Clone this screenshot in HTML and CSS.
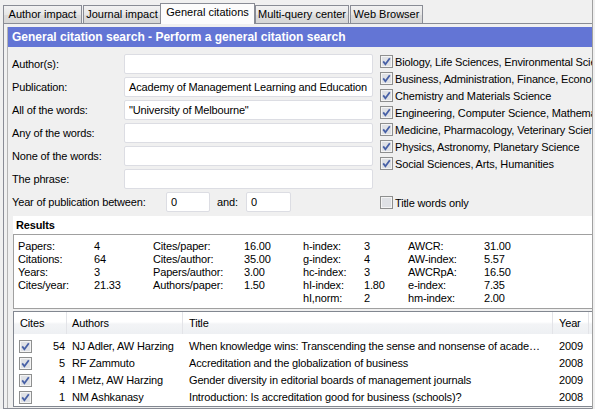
FILE: index.html
```html
<!DOCTYPE html>
<html>
<head>
<meta charset="utf-8">
<title>General citations</title>
<link rel="stylesheet" href="styles.css">
</head>
<body>
<div class="window">
  <div class="tabs">
    <div class="tab t-author">Author impact</div>
    <div class="tab t-journal">Journal impact</div>
    <div class="tab t-general active">General citations</div>
    <div class="tab t-multi">Multi-query center</div>
    <div class="tab t-web">Web Browser</div>
  </div>
  <div class="panel">
    <div class="frame">
      <div class="banner">General citation search - Perform a general citation search</div>
      <div class="search">
        <div class="fields">
          <div class="field"><label>Author(s):</label><div class="input"></div></div>
          <div class="field"><label>Publication:</label><div class="input">Academy of Management Learning and Education</div></div>
          <div class="field"><label>All of the words:</label><div class="input">"University of Melbourne"</div></div>
          <div class="field"><label>Any of the words:</label><div class="input"></div></div>
          <div class="field"><label>None of the words:</label><div class="input"></div></div>
          <div class="field"><label>The phrase:</label><div class="input"></div></div>
          <div class="field year"><label>Year of publication between:</label><div class="input y1">0</div><span class="and">and:</span><div class="input y2">0</div></div>
        </div>
        <div class="subjects">
          <div class="check"><svg class="cb" width="13" height="13" viewBox="0 0 13 13"><rect x="0.5" y="0.5" width="12" height="12" fill="#f4f4f4" stroke="#8e8f8f"/><rect x="2" y="2" width="9" height="9" fill="#dfe1e5"/><path d="M3.2 6.4 L5.4 9.2 L9.8 3.2" fill="none" stroke="#4760a6" stroke-width="1.8"/></svg><span>Biology, Life Sciences, Environmental Science</span></div>
          <div class="check"><svg class="cb" width="13" height="13" viewBox="0 0 13 13"><rect x="0.5" y="0.5" width="12" height="12" fill="#f4f4f4" stroke="#8e8f8f"/><rect x="2" y="2" width="9" height="9" fill="#dfe1e5"/><path d="M3.2 6.4 L5.4 9.2 L9.8 3.2" fill="none" stroke="#4760a6" stroke-width="1.8"/></svg><span>Business, Administration, Finance, Economics</span></div>
          <div class="check"><svg class="cb" width="13" height="13" viewBox="0 0 13 13"><rect x="0.5" y="0.5" width="12" height="12" fill="#f4f4f4" stroke="#8e8f8f"/><rect x="2" y="2" width="9" height="9" fill="#dfe1e5"/><path d="M3.2 6.4 L5.4 9.2 L9.8 3.2" fill="none" stroke="#4760a6" stroke-width="1.8"/></svg><span>Chemistry and Materials Science</span></div>
          <div class="check"><svg class="cb" width="13" height="13" viewBox="0 0 13 13"><rect x="0.5" y="0.5" width="12" height="12" fill="#f4f4f4" stroke="#8e8f8f"/><rect x="2" y="2" width="9" height="9" fill="#dfe1e5"/><path d="M3.2 6.4 L5.4 9.2 L9.8 3.2" fill="none" stroke="#4760a6" stroke-width="1.8"/></svg><span>Engineering, Computer Science, Mathematics</span></div>
          <div class="check"><svg class="cb" width="13" height="13" viewBox="0 0 13 13"><rect x="0.5" y="0.5" width="12" height="12" fill="#f4f4f4" stroke="#8e8f8f"/><rect x="2" y="2" width="9" height="9" fill="#dfe1e5"/><path d="M3.2 6.4 L5.4 9.2 L9.8 3.2" fill="none" stroke="#4760a6" stroke-width="1.8"/></svg><span>Medicine, Pharmacology, Veterinary Science</span></div>
          <div class="check"><svg class="cb" width="13" height="13" viewBox="0 0 13 13"><rect x="0.5" y="0.5" width="12" height="12" fill="#f4f4f4" stroke="#8e8f8f"/><rect x="2" y="2" width="9" height="9" fill="#dfe1e5"/><path d="M3.2 6.4 L5.4 9.2 L9.8 3.2" fill="none" stroke="#4760a6" stroke-width="1.8"/></svg><span>Physics, Astronomy, Planetary Science</span></div>
          <div class="check"><svg class="cb" width="13" height="13" viewBox="0 0 13 13"><rect x="0.5" y="0.5" width="12" height="12" fill="#f4f4f4" stroke="#8e8f8f"/><rect x="2" y="2" width="9" height="9" fill="#dfe1e5"/><path d="M3.2 6.4 L5.4 9.2 L9.8 3.2" fill="none" stroke="#4760a6" stroke-width="1.8"/></svg><span>Social Sciences, Arts, Humanities</span></div>
          <div class="check title-only"><svg class="cb" width="13" height="13" viewBox="0 0 13 13"><rect x="0.5" y="0.5" width="12" height="12" fill="#f4f4f4" stroke="#8e8f8f"/><rect x="2" y="2" width="9" height="9" fill="#dfe1e5"/></svg><span>Title words only</span></div>
        </div>
      </div>
      <div class="results">
        <div class="results-title">Results</div>
        <div class="stats">
          <span>Papers:</span><span>4</span><span>Cites/paper:</span><span>16.00</span><span>h-index:</span><span>3</span><span>AWCR:</span><span>31.00</span>
          <span>Citations:</span><span>64</span><span>Cites/author:</span><span>35.00</span><span>g-index:</span><span>4</span><span>AW-index:</span><span>5.57</span>
          <span>Years:</span><span>3</span><span>Papers/author:</span><span>3.00</span><span>hc-index:</span><span>3</span><span>AWCRpA:</span><span>16.50</span>
          <span>Cites/year:</span><span>21.33</span><span>Authors/paper:</span><span>1.50</span><span>hI-index:</span><span>1.80</span><span>e-index:</span><span>7.35</span>
          <span></span><span></span><span></span><span></span><span>hI,norm:</span><span>2</span><span>hm-index:</span><span>2.00</span>
        </div>
      </div>
      <div class="papers">
        <div class="thead">
          <div class="th">Cites</div>
          <div class="th">Authors</div>
          <div class="th">Title</div>
          <div class="th">Year</div>
          <div class="th last"></div>
        </div>
        <div class="tbody">
          <div class="tr">
            <div class="td cites"><svg class="cb" width="13" height="13" viewBox="0 0 13 13"><rect x="0.5" y="0.5" width="12" height="12" fill="#f4f4f4" stroke="#8e8f8f"/><rect x="2" y="2" width="9" height="9" fill="#dfe1e5"/><path d="M3.2 6.4 L5.4 9.2 L9.8 3.2" fill="none" stroke="#4760a6" stroke-width="1.8"/></svg><span>54</span></div>
            <div class="td">NJ Adler, AW Harzing</div>
            <div class="td title">When knowledge wins: Transcending the sense and nonsense of acade…</div>
            <div class="td">2009</div>
          </div>
          <div class="tr">
            <div class="td cites"><svg class="cb" width="13" height="13" viewBox="0 0 13 13"><rect x="0.5" y="0.5" width="12" height="12" fill="#f4f4f4" stroke="#8e8f8f"/><rect x="2" y="2" width="9" height="9" fill="#dfe1e5"/><path d="M3.2 6.4 L5.4 9.2 L9.8 3.2" fill="none" stroke="#4760a6" stroke-width="1.8"/></svg><span>5</span></div>
            <div class="td">RF Zammuto</div>
            <div class="td title">Accreditation and the globalization of business</div>
            <div class="td">2008</div>
          </div>
          <div class="tr">
            <div class="td cites"><svg class="cb" width="13" height="13" viewBox="0 0 13 13"><rect x="0.5" y="0.5" width="12" height="12" fill="#f4f4f4" stroke="#8e8f8f"/><rect x="2" y="2" width="9" height="9" fill="#dfe1e5"/><path d="M3.2 6.4 L5.4 9.2 L9.8 3.2" fill="none" stroke="#4760a6" stroke-width="1.8"/></svg><span>4</span></div>
            <div class="td">I Metz, AW Harzing</div>
            <div class="td title">Gender diversity in editorial boards of management journals</div>
            <div class="td">2009</div>
          </div>
          <div class="tr">
            <div class="td cites"><svg class="cb" width="13" height="13" viewBox="0 0 13 13"><rect x="0.5" y="0.5" width="12" height="12" fill="#f4f4f4" stroke="#8e8f8f"/><rect x="2" y="2" width="9" height="9" fill="#dfe1e5"/><path d="M3.2 6.4 L5.4 9.2 L9.8 3.2" fill="none" stroke="#4760a6" stroke-width="1.8"/></svg><span>1</span></div>
            <div class="td">NM Ashkanasy</div>
            <div class="td title">Introduction: Is accreditation good for business (schools)?</div>
            <div class="td">2008</div>
          </div>
        </div>
      </div>
    </div>
  </div>
</div>
</body>
</html>
```
FILE: styles.css
```css
* { box-sizing: border-box; }
html, body { margin: 0; padding: 0; }
body {
  width: 595px;
  height: 409px;
  overflow: hidden;
  background: #f0f0f0;
  font: 11px "Liberation Sans", Arial, sans-serif;
  letter-spacing: -0.15px;
  color: #000;
}
.window {
  width: 593px;
  height: 409px;
  border-right: 1px solid #a0a0a0;
  padding-left: 3px;
  display: flex;
  flex-direction: column;
}
.tabs {
  display: flex;
  align-items: flex-end;
  height: 23px;
  flex: none;
  position: relative;
  z-index: 2;
}
.tab {
  height: 18px;
  line-height: 16px;
  text-align: center;
  white-space: nowrap;
  letter-spacing: 0;
  border: 1px solid #898c95;
  border-bottom: none;
  background: linear-gradient(#f2f2f2, #e6e6e6 50%, #dcdcdc 51%, #d6d6d6);
}
.t-author { width: 79px; margin-right: 1px; }
.t-journal { width: 78px; }
.t-general { width: 95px; margin-left: -1px; }
.t-multi { width: 94px; margin-right: 1px; }
.t-web { width: 73px; }
.tab.active {
  height: 21px;
  line-height: 17px;
  margin-bottom: -1px;
  background: #fcfcfc;
}
.panel {
  flex: 1;
  min-height: 0;
  border: 1px solid #898c95;
  border-right: none;
  background: #f0f0f0;
  padding: 3px 0 0 3px;
}
.frame {
  height: 100%;
  border-left: 1px solid #b4b4b4;
  overflow: hidden;
}
.banner {
  height: 20px;
  line-height: 20px;
  margin-left: -1px;
  padding-left: 5px;
  background: #6375d5;
  color: #fff;
  font-weight: bold;
  font-size: 12px;
  letter-spacing: 0;
  white-space: nowrap;
}
.search {
  display: flex;
  padding: 7px 0 0 4px;
}
.fields {
  flex: none;
  width: 361px;
}
.field {
  display: flex;
  align-items: center;
  height: 20px;
  margin-bottom: 3px;
}
.field.year { margin-bottom: 0; }
.field label {
  width: 112px;
  flex: none;
  white-space: nowrap;
}
.input {
  width: 249px;
  height: 20px;
  line-height: 18px;
  padding: 0 4px;
  background: #fff;
  border: 1px solid #dcdde3;
  border-radius: 2px;
  white-space: nowrap;
  overflow: hidden;
}
.field.year label { width: 154px; }
.input.y1 { width: 44px; }
.input.y2 { width: 45px; }
.and { width: 36px; padding-left: 7px; }
.subjects {
  flex: 1;
  min-width: 0;
  margin-left: 7px;
  display: flex;
  flex-direction: column;
}
.check {
  display: flex;
  align-items: center;
  height: 17px;
  white-space: nowrap;
}
.check:first-child { margin-top: -1px; }
.cb { flex: none; display: block; }
.check .cb { margin-right: 2px; }
.check.title-only { margin-top: auto; margin-bottom: 1px; }
.results {
  margin: 4px 0 0 5px;
}
.results-title {
  height: 18px;
  line-height: 18px;
  padding-left: 3px;
  background: #fff;
  font-weight: bold;
}
.stats {
  height: 75px;
  background: #fff;
  border: 1px solid #a0a0a0;
  border-right: none;
  padding: 5px 0 0 4px;
  display: grid;
  grid-template-columns: 76px 59px 91px 59px 61px 44px 76px 1fr;
  grid-auto-rows: 13px;
  line-height: 13px;
  white-space: nowrap;
}
.papers {
  margin: 2px 0 0 5px;
  height: 96px;
  background: #fff;
  border: 1px solid #828790;
  border-right: none;
}
.thead, .tr {
  display: grid;
  grid-template-columns: 53px 116px 370px 36px 1fr;
}
.thead {
  height: 22px;
  background: linear-gradient(#ffffff, #ffffff 45%, #f3f4f6 55%, #eef0f3);
}
.th {
  line-height: 22px;
  padding-left: 6px;
  border-right: 1px solid #e3e4e8;
  white-space: nowrap;
}
.th.last { border-right: none; }
.th:nth-child(2) { padding-left: 5px; }
.tbody { padding-top: 4px; }
.tr { height: 17px; }
.td {
  line-height: 17px;
  padding-left: 6px;
  white-space: nowrap;
  overflow: hidden;
}
.td:nth-child(2) { padding-left: 5px; }
.td.cites {
  display: flex;
  align-items: center;
  justify-content: space-between;
  padding: 0 2px 0 5px;
}
.td.title {
  text-overflow: ellipsis;
  padding-right: 4px;
}
```
